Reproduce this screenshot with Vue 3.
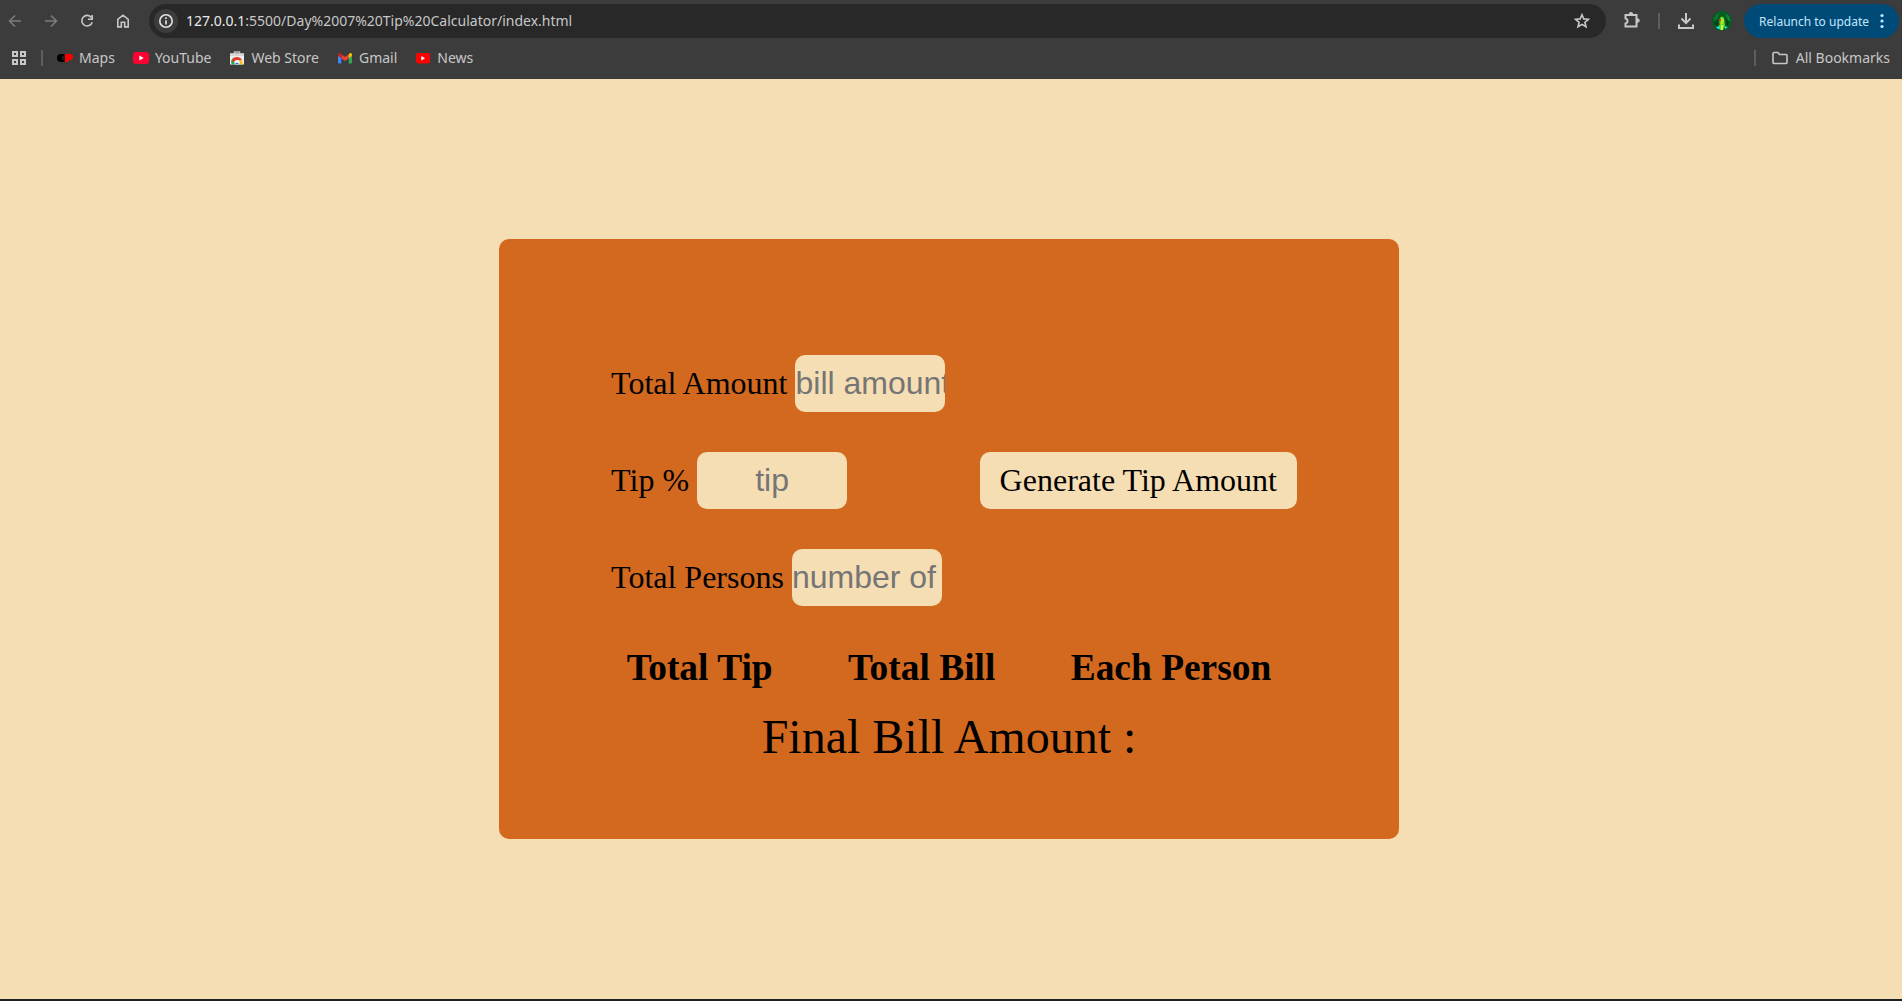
<script setup>
import { ref } from 'vue'

const bill = ref('')
const tip = ref('')
const persons = ref('')

const bookmarks = [
  { name: 'Maps', icon: 'cp' },
  { name: 'YouTube', icon: 'youtube' },
  { name: 'Web Store', icon: 'store' },
  { name: 'Gmail', icon: 'gmail' },
  { name: 'News', icon: 'news' },
]

const totals = ['Total Tip', 'Total Bill', 'Each Person']
</script>

<template>
  <div class="window">
    <header class="chrome">
      <div class="toolbar">
        <nav class="nav" aria-label="Navigation">
          <button class="tool dim" aria-label="Back">
            <svg width="16" height="16" viewBox="0 0 16 16"><path d="M14 8H3M8 2.500L2.500 8L8 13.500" /></svg>
          </button>
          <button class="tool dim" aria-label="Forward">
            <svg width="16" height="16" viewBox="0 0 16 16"><path d="M2 8H13M8 2.500L13.500 8L8 13.500" /></svg>
          </button>
          <button class="tool" aria-label="Reload">
            <svg width="16" height="16" viewBox="0 0 16 16"><path d="M12.400 4.600A5.300 5.300 0 1 0 13.200 9.200M13.200 2V6.300H8.900" /></svg>
          </button>
          <button class="tool" aria-label="Home">
            <svg width="16" height="16" viewBox="0 0 16 16"><path d="M2.800 6.300L8 2.200L13.200 6.300V13.900H9.700V9.200H6.300V13.900H2.800Z" /></svg>
          </button>
        </nav>

        <div class="omnibox">
          <button class="info" aria-label="Site information">
            <svg width="16" height="16" viewBox="0 0 16 16"><circle cx="8" cy="8" r="6.200" /><path d="M8 7.200V11.500M8 4.300V6" /></svg>
          </button>
          <div class="url" role="textbox" aria-label="Address" contenteditable="true" spellcheck="false"><span class="host">127.0.0.1</span>:5500/Day%2007%20Tip%20Calculator/index.html</div>
          <button class="tool" aria-label="Bookmark this page">
            <svg width="18" height="18" viewBox="0 0 18 18"><path d="M9 2.700L10.800 6.900L15.400 7.300L11.900 10.300L13 14.800L9 12.400L5 14.800L6.100 10.300L2.600 7.300L7.200 6.900Z" /></svg>
          </button>
        </div>

        <div class="actions">
          <button class="tool heavy" aria-label="Extensions">
            <svg width="20" height="20" viewBox="0 0 20 20"><path d="M3.500 4H14.500V15.500H3.500V12.500C6.200 12 6.200 8 3.500 7.500Z" /><path class="knob" d="M6.700 4Q6.700 1 9 1Q11.300 1 11.300 4ZM14.500 7.200Q17.700 7.200 17.700 9.600Q17.700 12 14.500 12Z" /></svg>
          </button>
          <span class="divider"></span>
          <button class="tool heavy" aria-label="Downloads">
            <svg width="18" height="18" viewBox="0 0 18 18"><path d="M9 1V10.500M4.500 6.500L9 11L13.500 6.500M2 12.500V16H16V12.500" /></svg>
          </button>
          <button class="tool avatar" aria-label="Profile">
            <svg width="20" height="20" viewBox="0 0 20 20">
              <circle cx="10" cy="10" r="10" fill="#075c24" />
              <path d="M2 7L5 3L8 1.500L5 7L3 11Z" fill="#0b7a2e" />
              <path d="M13 2.500L17 5L19 11L16 9Z" fill="#0c8a33" />
              <path d="M2 11L6 9L6 15L3 14ZM14 8L17 11L15 16Z" fill="#034016" />
              <path d="M8 7Q10 4 12 7L13 14L11 19H8L7 14Z" fill="#5bdd20" />
              <path d="M9 8L10 7L12 9L11 13H9Z" fill="#b5e52b" />
              <path d="M7 8H9V10H7ZM7 12H8V14H7Z" fill="#a64b25" />
              <path d="M4 16L8 15L9 18H6ZM12 15L16 16L13 18Z" fill="#20e5bd" />
              <path d="M9 14H11V19H9Z" fill="#e1ed35" />
            </svg>
          </button>
          <button class="relaunch">
            Relaunch to update
            <svg width="4" height="16" viewBox="0 0 4 16"><circle cx="2" cy="2.500" r="1.600" /><circle cx="2" cy="8" r="1.600" /><circle cx="2" cy="13.500" r="1.600" /></svg>
          </button>
        </div>
      </div>

      <nav class="bookmarks" aria-label="Bookmarks">
        <button class="apps heavy" aria-label="Apps">
          <svg width="14" height="14" viewBox="0 0 14 14"><path d="M1 1H5V5H1ZM9 1H13V5H9ZM1 9H5V13H1ZM9 9H13V13H9Z" /></svg>
        </button>
        <span class="divider"></span>
        <ul class="links">
          <li v-for="item in bookmarks" :key="item.name">
            <a href="#">
              <svg v-if="item.icon === 'cp'" width="16" height="16" viewBox="0 0 16 16">
                <path d="M4 4H7.500V6.500H5V9.500H7.500V12H4Q0 12 0 8Q0 4 4 4Z" fill="#000" />
                <path d="M5 6.500H8V9.500H5Z" fill="#1b1b1b" />
                <path d="M8 4H13Q16 4 16 7Q16 10 13 10H11.500V12H8Z" fill="#f00" />
              </svg>
              <svg v-else-if="item.icon === 'youtube'" width="16" height="16" viewBox="0 0 16 16">
                <rect y="2" width="16" height="12" rx="3" fill="#ff0033" />
                <path d="M6.300 5.500L10.700 8L6.300 10.500Z" fill="#fff" />
              </svg>
              <svg v-else-if="item.icon === 'store'" width="16" height="16" viewBox="0 0 16 16">
                <path d="M5.500 4V2H10.500V4" fill="none" stroke="#b9bcbf" stroke-width="1.500" />
                <path d="M1 3.500H15V14.500H1Z" fill="#eceff1" />
                <path d="M1 3.500H15V6H1Z" fill="#d4d7da" />
                <path d="M2.700 14.500A5.500 5.500 0 0 1 5 7.500L8 12L6.500 14.500Z" fill="#2ca94f" />
                <path d="M3 10.200A5.500 5.500 0 0 1 13 10.200L8 10.500L5.500 13Z" fill="#e33b2e" />
                <path d="M10 10.200H13Q14 12 13.300 14.500H8.500Z" fill="#fbc116" />
                <circle cx="8" cy="12.500" r="2.600" fill="#fff" />
                <path d="M6 14.500A2 2 0 1 1 10 14.500Z" fill="#347ff0" />
              </svg>
              <svg v-else-if="item.icon === 'gmail'" width="16" height="16" viewBox="0 0 16 16">
                <path d="M1 4.500L4.300 7V13.500H2Q1 13.500 1 12.500Z" fill="#4285f4" />
                <path d="M15 4.500L11.700 7V13.500H14Q15 13.500 15 12.500Z" fill="#34a853" />
                <path d="M4.300 4.200L8 7L11.700 4.200V8.200L8 11L4.300 8.200Z" fill="#ea4335" />
                <path d="M1 4.500Q1 2.500 3 3L4.300 4.200V8.200L1 5.800Z" fill="#c5221f" />
                <path d="M15 4.500Q15 2.500 13 3L11.700 4.200V8.200L15 5.800Z" fill="#fbbc04" />
              </svg>
              <svg v-else width="16" height="16" viewBox="0 0 16 16">
                <rect x="1" y="3" width="14" height="10.500" rx="2" fill="#f00" />
                <path d="M6.300 6L10 8.200L6.300 10.400Z" fill="#fff" />
              </svg>
              {{ item.name }}
            </a>
          </li>
        </ul>
        <span class="divider"></span>
        <a class="all" href="#">
          <svg width="16" height="14" viewBox="0 0 16 14"><path d="M1 2.500Q1 1.500 2 1.500H6L7.500 3.500H14Q15 3.500 15 4.500V11.500Q15 12.500 14 12.500H2Q1 12.500 1 11.500Z" /></svg>
          All Bookmarks
        </a>
      </nav>
    </header>

    <main class="page">
      <form class="card" @submit.prevent>
        <div class="entry">
          <div class="fields">
            <div class="field">
              <label for="bill">Total Amount</label>
              <input id="bill" v-model="bill" type="text" inputmode="decimal" placeholder="bill amount" />
            </div>
            <div class="field">
              <label for="tip">Tip %</label>
              <input id="tip" v-model="tip" type="text" inputmode="decimal" placeholder="tip" />
            </div>
            <div class="field">
              <label for="persons">Total Persons</label>
              <input id="persons" v-model="persons" type="text" inputmode="numeric" placeholder="number of persons" />
            </div>
          </div>
          <button class="generate" type="submit">Generate Tip Amount</button>
        </div>
        <div class="totals">
          <h3 v-for="label in totals" :key="label">{{ label }}</h3>
        </div>
        <p class="final">Final Bill Amount :</p>
      </form>
    </main>
  </div>
</template>

<style>
body {
  margin: 0;
}
</style>

<style scoped>
.window {
  box-sizing: border-box;
  min-height: 100vh;
  display: flex;
  flex-direction: column;
  border-bottom: 2px solid #1d2127;
  background: wheat;
}

button {
  border: 0;
  padding: 0;
  background: none;
  color: inherit;
  font-family: inherit;
}

/* Browser chrome */
.chrome {
  box-sizing: border-box;
  height: 79px;
  padding-top: 4px;
  background: #3c3c3c;
  color: #c7c7c7;
  font-family: "Noto Sans", sans-serif;
}

.chrome svg {
  display: block;
  flex: none;
}

.toolbar {
  display: flex;
  align-items: center;
  gap: 12px;
  height: 34px;
  padding: 0 3px 0 1px;
}

.nav,
.actions {
  display: flex;
  align-items: center;
  gap: 8px;
}

.tool {
  display: flex;
  align-items: center;
  justify-content: center;
  width: 28px;
  height: 28px;
}

.tool svg,
.info svg,
.apps svg,
.all svg {
  fill: none;
  stroke: currentColor;
  stroke-width: 1.600;
}

.heavy svg {
  stroke-width: 2;
}

.heavy .knob {
  fill: currentColor;
  stroke: none;
}

.tool.dim {
  color: #7c7c7c;
}

.avatar svg {
  stroke: none;
}

.omnibox {
  flex: 1;
  display: flex;
  align-items: center;
  height: 34px;
  box-sizing: border-box;
  padding: 0 10px 0 5px;
  border-radius: 17px;
  background: #282828;
}

.info {
  display: flex;
  align-items: center;
  justify-content: center;
  width: 24px;
  height: 24px;
  border-radius: 50%;
  background: #3c3c3c;
  color: #e3e3e3;
}

.url {
  flex: 1;
  margin-left: 8px;
  font-size: 14px;
  line-height: 20px;
  white-space: nowrap;
}

.host {
  color: #e8e8e8;
}

.divider {
  width: 2px;
  height: 16px;
  background: #5e5e5e;
}

.actions .divider {
  margin: 0 4px;
}

.relaunch {
  display: flex;
  align-items: center;
  gap: 11px;
  height: 34px;
  padding: 0 15px;
  border-radius: 17px;
  background: #004a77;
  color: #c2e7ff;
  font-size: 12px;
  white-space: nowrap;
}

.relaunch svg {
  fill: currentColor;
}

.bookmarks {
  display: flex;
  align-items: center;
  height: 40px;
  padding: 0 12px;
  font-size: 14px;
  line-height: 20px;
}

.apps {
  margin-right: 15px;
}

.links {
  flex: 1;
  display: flex;
  gap: 18px;
  margin: 0 0 0 14px;
  padding: 0;
  list-style: none;
}

.bookmarks a {
  display: flex;
  align-items: center;
  gap: 6px;
  color: inherit;
  text-decoration: none;
  white-space: nowrap;
}

.bookmarks .all {
  gap: 8px;
  margin-left: 16px;
}

/* Tip calculator */
.page {
  flex: 1;
  display: flex;
  align-items: center;
  justify-content: center;
  padding-right: 4px;
  color: #000;
  font-family: "Liberation Serif", serif;
  font-size: 32px;
}

.card {
  box-sizing: border-box;
  width: 900px;
  max-width: 100%;
  min-height: 600px;
  padding-top: 116px;
  border-radius: 10px;
  background: chocolate;
}

.entry {
  display: flex;
  align-items: center;
  justify-content: space-around;
  width: 80%;
  margin: 0 auto;
}

.fields {
  display: flex;
  flex-direction: column;
  gap: 40px;
  padding: 0 10px;
}

.field {
  display: flex;
  align-items: center;
  gap: 8px;
}

.field input {
  box-sizing: border-box;
  width: 150px;
  height: 57px;
  padding: 0;
  border: 0;
  border-radius: 10px;
  background: wheat;
  font-family: "Liberation Sans", sans-serif;
  font-size: 32px;
  text-align: center;
}

.field input::placeholder {
  color: #757575;
}

.generate {
  height: 57px;
  padding: 0 20px;
  border-radius: 10px;
  background: wheat;
  font-size: 32px;
  white-space: nowrap;
}

.totals {
  display: flex;
  justify-content: space-around;
  width: 80%;
  margin: 40px auto 20px;
}

.totals h3 {
  margin: 0;
}

.final {
  margin: 0;
  font-size: 48px;
  text-align: center;
}
</style>
